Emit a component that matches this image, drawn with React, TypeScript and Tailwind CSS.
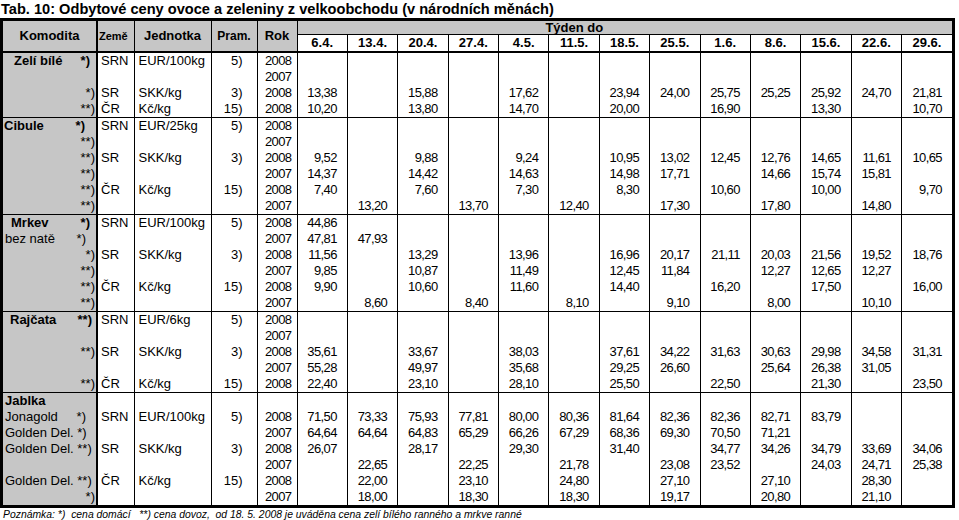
import React from "react";

const weeks = ["6.4.", "13.4.", "20.4.", "27.4.", "4.5.", "11.5.", "18.5.", "25.5.", "1.6.", "8.6.", "15.6.", "22.6.", "29.6."];

type Row = {
  name?: string;
  mark?: string;
  bold?: boolean;
  pad?: string;
  zeme?: string;
  unit?: string;
  pram?: string;
  rok?: string;
  v?: string;
};

const groups: Row[][] = [
  [
    { name: "Zelí bílé", mark: "*)", bold: true, pad: "pl-[11px] pr-[6px]", zeme: "SRN", unit: "EUR/100kg", pram: "5)", rok: "2008" },
    { rok: "2007" },
    { mark: "*)", zeme: "SR", unit: "SKK/kg", pram: "3)", rok: "2008", v: "13,38||15,88||17,62||23,94|24,00|25,75|25,25|25,92|24,70|21,81" },
    { mark: "**)", zeme: "ČR", unit: "Kč/kg", pram: "15)", rok: "2008", v: "10,20||13,80||14,70||20,00||16,90||13,30||10,70" },
  ],
  [
    { name: "Cibule", mark: "*)", bold: true, pad: "pl-[1px] pr-[11px]", zeme: "SRN", unit: "EUR/25kg", pram: "5)", rok: "2008" },
    { mark: "**)", rok: "2007" },
    { mark: "**)", zeme: "SR", unit: "SKK/kg", pram: "3)", rok: "2008", v: "9,52||9,88||9,24||10,95|13,02|12,45|12,76|14,65|11,61|10,65" },
    { mark: "**)", rok: "2007", v: "14,37||14,42||14,63||14,98|17,71||14,66|15,74|15,81|" },
    { mark: "**)", zeme: "ČR", unit: "Kč/kg", pram: "15)", rok: "2008", v: "7,40||7,60||7,30||8,30||10,60||10,00||9,70" },
    { mark: "**)", rok: "2007", v: "|13,20||13,70||12,40||17,30||17,80||14,80|" },
  ],
  [
    { name: "Mrkev", mark: "*)", bold: true, pad: "pl-[8px] pr-[6px]", zeme: "SRN", unit: "EUR/100kg", pram: "5)", rok: "2008", v: "44,86" },
    { name: "bez natě", mark: "*)", pad: "pl-[2px] pr-[10px]", rok: "2007", v: "47,81|47,93" },
    { mark: "*)", zeme: "SR", unit: "SKK/kg", pram: "3)", rok: "2008", v: "11,56||13,29||13,96||16,96|20,17|21,11|20,03|21,56|19,52|18,76" },
    { mark: "**)", rok: "2007", v: "9,85||10,87||11,49||12,45|11,84||12,27|12,65|12,27|" },
    { mark: "**)", zeme: "ČR", unit: "Kč/kg", pram: "15)", rok: "2008", v: "9,90||10,60||11,60||14,40||16,20||17,50||16,00" },
    { mark: "**)", rok: "2007", v: "|8,60||8,40||8,10||9,10||8,00||10,10|" },
  ],
  [
    { name: "Rajčata", mark: "**)", bold: true, pad: "pl-[7px] pr-[4px]", zeme: "SRN", unit: "EUR/6kg", pram: "5)", rok: "2008" },
    { rok: "2007" },
    { mark: "**)", zeme: "SR", unit: "SKK/kg", pram: "3)", rok: "2008", v: "35,61||33,67||38,03||37,61|34,22|31,63|30,63|29,98|34,58|31,31" },
    { rok: "2007", v: "55,28||49,97||35,68||29,25|26,60||25,64|26,38|31,05|" },
    { mark: "**)", zeme: "ČR", unit: "Kč/kg", pram: "15)", rok: "2008", v: "22,40||23,10||28,10||25,50||22,50||21,30||23,50" },
  ],
  [
    { name: "Jablka", bold: true, pad: "pl-[2px]" },
    { name: "Jonagold", mark: "*)", pad: "pl-[2px] pr-[10px]", zeme: "SRN", unit: "EUR/100kg", pram: "5)", rok: "2008", v: "71,50|73,33|75,93|77,81|80,00|80,36|81,64|82,36|82,36|82,71|83,79" },
    { name: "Golden Del. *)", pad: "pl-[2px]", rok: "2007", v: "64,64|64,64|64,83|65,29|66,26|67,29|68,36|69,30|70,50|71,21" },
    { name: "Golden Del. **)", pad: "pl-[2px]", zeme: "SR", unit: "SKK/kg", pram: "3)", rok: "2008", v: "26,07||28,17||29,30||31,40||34,77|34,26|34,79|33,69|34,06" },
    { rok: "2007", v: "|22,65||22,25||21,78||23,08|23,52||24,03|24,71|25,38" },
    { name: "Golden Del. **)", pad: "pl-[2px]", zeme: "ČR", unit: "Kč/kg", pram: "15)", rok: "2008", v: "|22,00||23,10||24,80||27,10||27,10||28,30|" },
    { mark: "*)", rok: "2007", v: "|18,00||18,30||18,30||19,17||20,80||21,10|" },
  ],
];

function Komodita({ r }: { r: Row }) {
  const weight = r.bold ? "font-bold" : "";
  if (r.name && r.mark) {
    return (
      <div className={`flex justify-between ${r.pad} ${weight}`}>
        <span>{r.name}</span>
        <span>{r.mark}</span>
      </div>
    );
  }
  if (r.name) return <div className={`${r.pad} ${weight}`}>{r.name}</div>;
  return <div className="text-right pr-[1px]">{r.mark}</div>;
}

export default function App() {
  return (
    <div className="w-[959px] h-[520px] bg-white text-black font-['Liberation_Sans',Arial,sans-serif] overflow-hidden">
      <h1 className="text-[14.6px] font-bold leading-[18px] pl-[1px]">
        Tab. 10: Odbytové ceny ovoce a zeleniny z velkoobchodu (v národních měnách)
      </h1>
      <div className="w-[955px] border-[3px] border-black">
        <table className="w-full table-fixed border-collapse">
          <colgroup>
            <col className="w-[94px]" />
            <col className="w-[37px]" />
            <col className="w-[77px]" />
            <col className="w-[46px]" />
            <col className="w-[40px]" />
            {weeks.map((w) => (
              <col key={w} />
            ))}
          </colgroup>
          <thead>
            <tr className="h-[13px] bg-[#c6c6c6]">
              <th rowSpan={2} className="border-r-2 border-b-2 border-black text-[13px] font-bold text-center p-0">Komodita</th>
              <th rowSpan={2} className="border-r border-b-2 border-black text-[11px] font-bold text-left pl-[1px] p-0">Země</th>
              <th rowSpan={2} className="border-r border-b-2 border-black text-[13px] font-bold text-center p-0">Jednotka</th>
              <th rowSpan={2} className="border-r border-b-2 border-black text-[12px] font-bold text-center p-0">Pram.</th>
              <th rowSpan={2} className="border-r border-b-2 border-black text-[13px] font-bold text-center p-0">Rok</th>
              <th colSpan={11} className="border-b-[1.5px] border-black text-[13px] font-bold text-center leading-[13px] p-0">Týden do</th>
              <th colSpan={2} className="border-b-[1.5px] border-black p-0"></th>
            </tr>
            <tr className="h-[16px] bg-white">
              {weeks.map((w, i) => (
                <th key={w} className={`${i > 0 ? "border-l" : ""} border-b-2 border-black text-[13px] font-bold text-center leading-[16px] p-0`}>
                  {w}
                </th>
              ))}
            </tr>
          </thead>
          <tbody>
            {groups.map((g, gi) =>
              g.map((r, ri) => {
                const vals = (r.v ?? "").split("|");
                const top = gi > 0 && ri === 0 ? "border-t-[1.5px]" : "";
                return (
                  <tr key={`${gi}-${ri}`} className="h-[16px] leading-[16px]">
                    <td className={`${top} border-r-2 border-black bg-[#c6c6c6] text-[13px] p-0 whitespace-nowrap`}>
                      <Komodita r={r} />
                    </td>
                    <td className={`${top} border-r border-black text-[13px] pl-[3px] p-0`}>{r.zeme}</td>
                    <td className={`${top} border-r border-black text-[13px] pl-[4px] p-0`}>{r.unit}</td>
                    <td className={`${top} border-r border-black text-[13px] text-right pr-[14px] p-0`}>{r.pram}</td>
                    <td className={`${top} border-r border-black text-[13px] tracking-[-0.6px] text-right pr-[5px] p-0`}>{r.rok}</td>
                    {weeks.map((w, i) => (
                      <td key={w} className={`${top} ${i > 0 ? "border-l" : ""} border-black text-[13px] tracking-[-0.6px] text-right pr-[10px] p-0`}>
                        {vals[i] ?? ""}
                      </td>
                    ))}
                  </tr>
                );
              })
            )}
          </tbody>
        </table>
      </div>
      <p className="text-[10.4px] italic leading-[14px] pl-[3px]">
        Poznámka: *)&nbsp; cena domácí&nbsp;&nbsp; **) cena dovoz,&nbsp; od 18. 5. 2008 je uváděna cena zelí bílého ranného a mrkve ranné
      </p>
    </div>
  );
}
